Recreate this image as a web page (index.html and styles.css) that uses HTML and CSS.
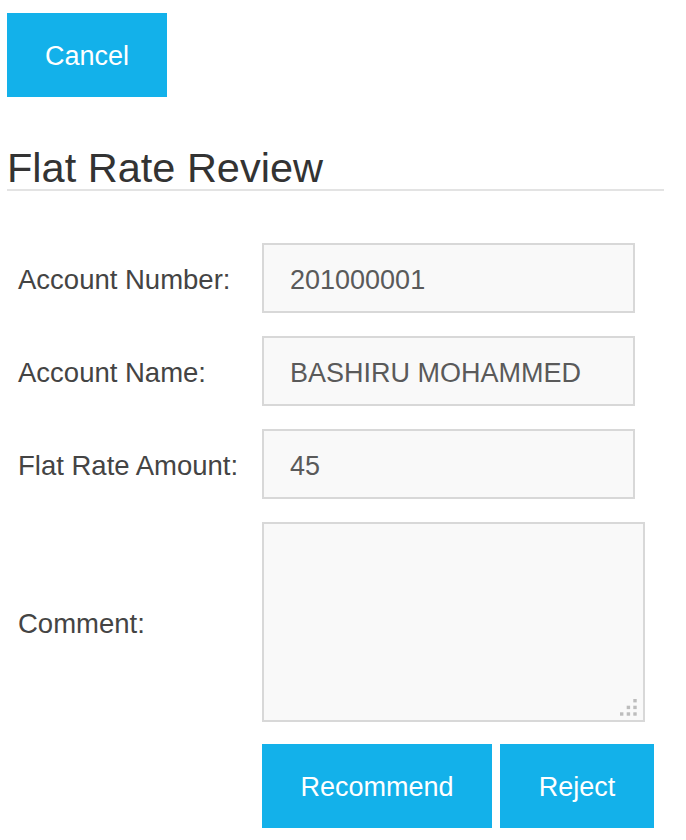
FILE: index.html
```html
<!DOCTYPE html>
<html lang="en">
<head>
<meta charset="utf-8">
<title>Flat Rate Review</title>
<link rel="stylesheet" href="styles.css">
</head>
<body>
<div class="page">
  <div class="top-actions">
    <button class="btn btn-cancel" type="button">Cancel</button>
  </div>
  <h1 class="title">Flat Rate Review</h1>
  <form class="review-form">
    <label class="field-label" for="acc-no">Account Number:</label>
    <input class="field-input" id="acc-no" type="text" value="201000001" readonly>

    <label class="field-label" for="acc-name">Account Name:</label>
    <input class="field-input" id="acc-name" type="text" value="BASHIRU MOHAMMED" readonly>

    <label class="field-label" for="amount">Flat Rate Amount:</label>
    <input class="field-input" id="amount" type="text" value="45" readonly>

    <label class="field-label" for="comment">Comment:</label>
    <div class="textarea-wrap">
      <textarea class="field-textarea" id="comment"></textarea>
      <svg class="grip" width="17" height="17" viewBox="0 0 17 17" aria-hidden="true">
        <rect x="13.3" y="0" width="3.4" height="3.4"/>
        <rect x="6.7" y="6.7" width="3.4" height="3.4"/>
        <rect x="13.3" y="6.7" width="3.4" height="3.4"/>
        <rect x="0" y="13.3" width="3.4" height="3.4"/>
        <rect x="6.7" y="13.3" width="3.4" height="3.4"/>
        <rect x="13.3" y="13.3" width="3.4" height="3.4"/>
      </svg>
    </div>

    <div class="form-actions">
      <button class="btn btn-recommend" type="button">Recommend</button>
      <button class="btn btn-reject" type="button">Reject</button>
    </div>
  </form>
</div>
</body>
</html>
```

FILE: styles.css
```css
html, body {
  margin: 0;
  padding: 0;
  background: #ffffff;
}

body {
  font-family: "Liberation Sans", Arial, sans-serif;
  color: #3a3a3a;
}

.page {
  width: 657px;
  padding: 13px 0 0 7px;
}

.top-actions {
  display: flex;
}

.btn {
  display: inline-flex;
  align-items: center;
  justify-content: center;
  box-sizing: border-box;
  height: 84px;
  padding: 2px 38px 0;
  border: none;
  background: #13b1ea;
  color: #ffffff;
  font-family: "Liberation Sans", Arial, sans-serif;
  font-size: 27px;
  line-height: 1;
  cursor: pointer;
}

.btn-cancel {
  width: 160px;
}

.title {
  margin: 50px 0 0 0;
  font-size: 41.5px;
  font-weight: normal;
  line-height: 42px;
  color: #333333;
  border-bottom: 2px solid #e3e3e3;
}

.review-form {
  display: grid;
  grid-template-columns: 244px auto;
  row-gap: 23px;
  align-items: center;
  justify-items: start;
  margin-top: 52px;
  padding-left: 11px;
}

.field-label {
  padding-top: 4px;
  font-size: 27.5px;
  color: #444444;
}

.field-input {
  box-sizing: border-box;
  width: 373px;
  height: 70px;
  margin: 0;
  padding: 4px 26px 0;
  border: 2px solid #d8d8d8;
  border-radius: 0;
  background: #f9f9f9;
  color: #5a5a5a;
  font-family: "Liberation Sans", Arial, sans-serif;
  font-size: 27px;
  outline: none;
}

.textarea-wrap {
  position: relative;
  width: 383px;
  height: 200px;
}

.field-textarea {
  display: block;
  box-sizing: border-box;
  width: 383px;
  height: 200px;
  margin: 0;
  padding: 10px 26px;
  border: 2px solid #d8d8d8;
  border-radius: 0;
  background: #f9f9f9;
  color: #5a5a5a;
  font-family: "Liberation Sans", Arial, sans-serif;
  font-size: 27px;
  resize: none;
  outline: none;
}

.grip {
  position: absolute;
  right: 8px;
  bottom: 6px;
  fill: #bdbdbd;
}

.form-actions {
  grid-column: 2;
  display: flex;
  gap: 8px;
  margin-top: -1px;
}

.btn-recommend {
  width: 230px;
}

.btn-reject {
  width: 154px;
}
```
